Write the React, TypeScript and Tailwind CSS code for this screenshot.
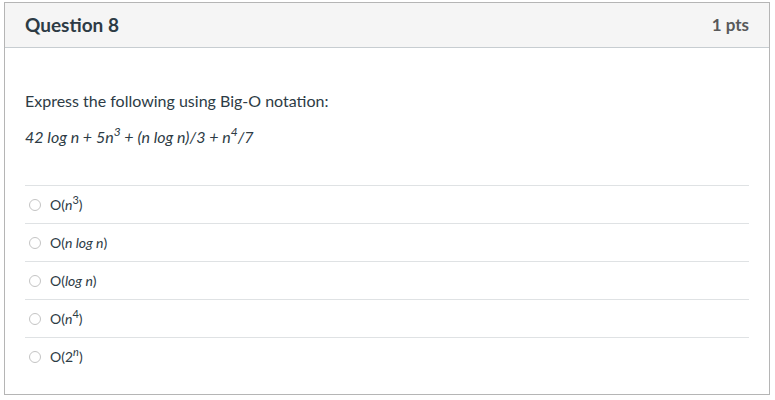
import React from 'react';

const Sup: React.FC<{ children: React.ReactNode; big?: boolean }> = ({ children, big }) => (
  <sup className={big ? 'text-[12px] -top-[7px]' : 'text-[11px] -top-[6px]'}>{children}</sup>
);

const answers: React.ReactNode[] = [
  <>O(<i>n</i><Sup>3</Sup>)</>,
  <>O(<i>n log n</i>)</>,
  <>O(<i>log n</i>)</>,
  <>O(<i>n</i><Sup>4</Sup>)</>,
  <>O(2<Sup><i>n</i></Sup>)</>,
];

const App: React.FC = () => {
  return (
    <div className="w-[775px] h-[400px] bg-white pt-[2px] pl-[4px]" style={{ fontFamily: 'Lato, "Open Sans", sans-serif' }}>
      <div className="w-[766px] h-[393px] border border-[#b5b5b5] text-[#2d3b45] flex flex-col">
        <div className="h-[45px] bg-[#f5f5f5] border-b border-[#c7cdd1] flex items-center justify-between px-[20px]">
          <span className="text-[19px] font-bold text-[#2d3b45]">Question 8</span>
          <span className="text-[17px] font-bold text-[#58595b]">1 pts</span>
        </div>
        <div className="px-[20px] pt-[43px] flex flex-col">
          <p className="text-[16px] leading-[20px]">Express the following using Big-O notation:</p>
          <p className="text-[16px] leading-[20px] italic mt-[16px]">
            42 log n + 5n<Sup big>3</Sup> + (n log n)/3 + n<Sup big>4</Sup>/7
          </p>
          <div className="mt-[38px] flex flex-col">
            {answers.map((a, i) => (
              <div key={i} className="h-[38px] border-t border-[#dfe2e4] flex items-center gap-[9px] pl-[4px] text-[14px]">
                <span className="w-[12px] h-[12px] rounded-full border border-[#c4c4c4] bg-white"></span>
                <span className="text-[#2d3b45] -mt-[1px]">{a}</span>
              </div>
            ))}
          </div>
        </div>
      </div>
    </div>
  );
};

export default App;
